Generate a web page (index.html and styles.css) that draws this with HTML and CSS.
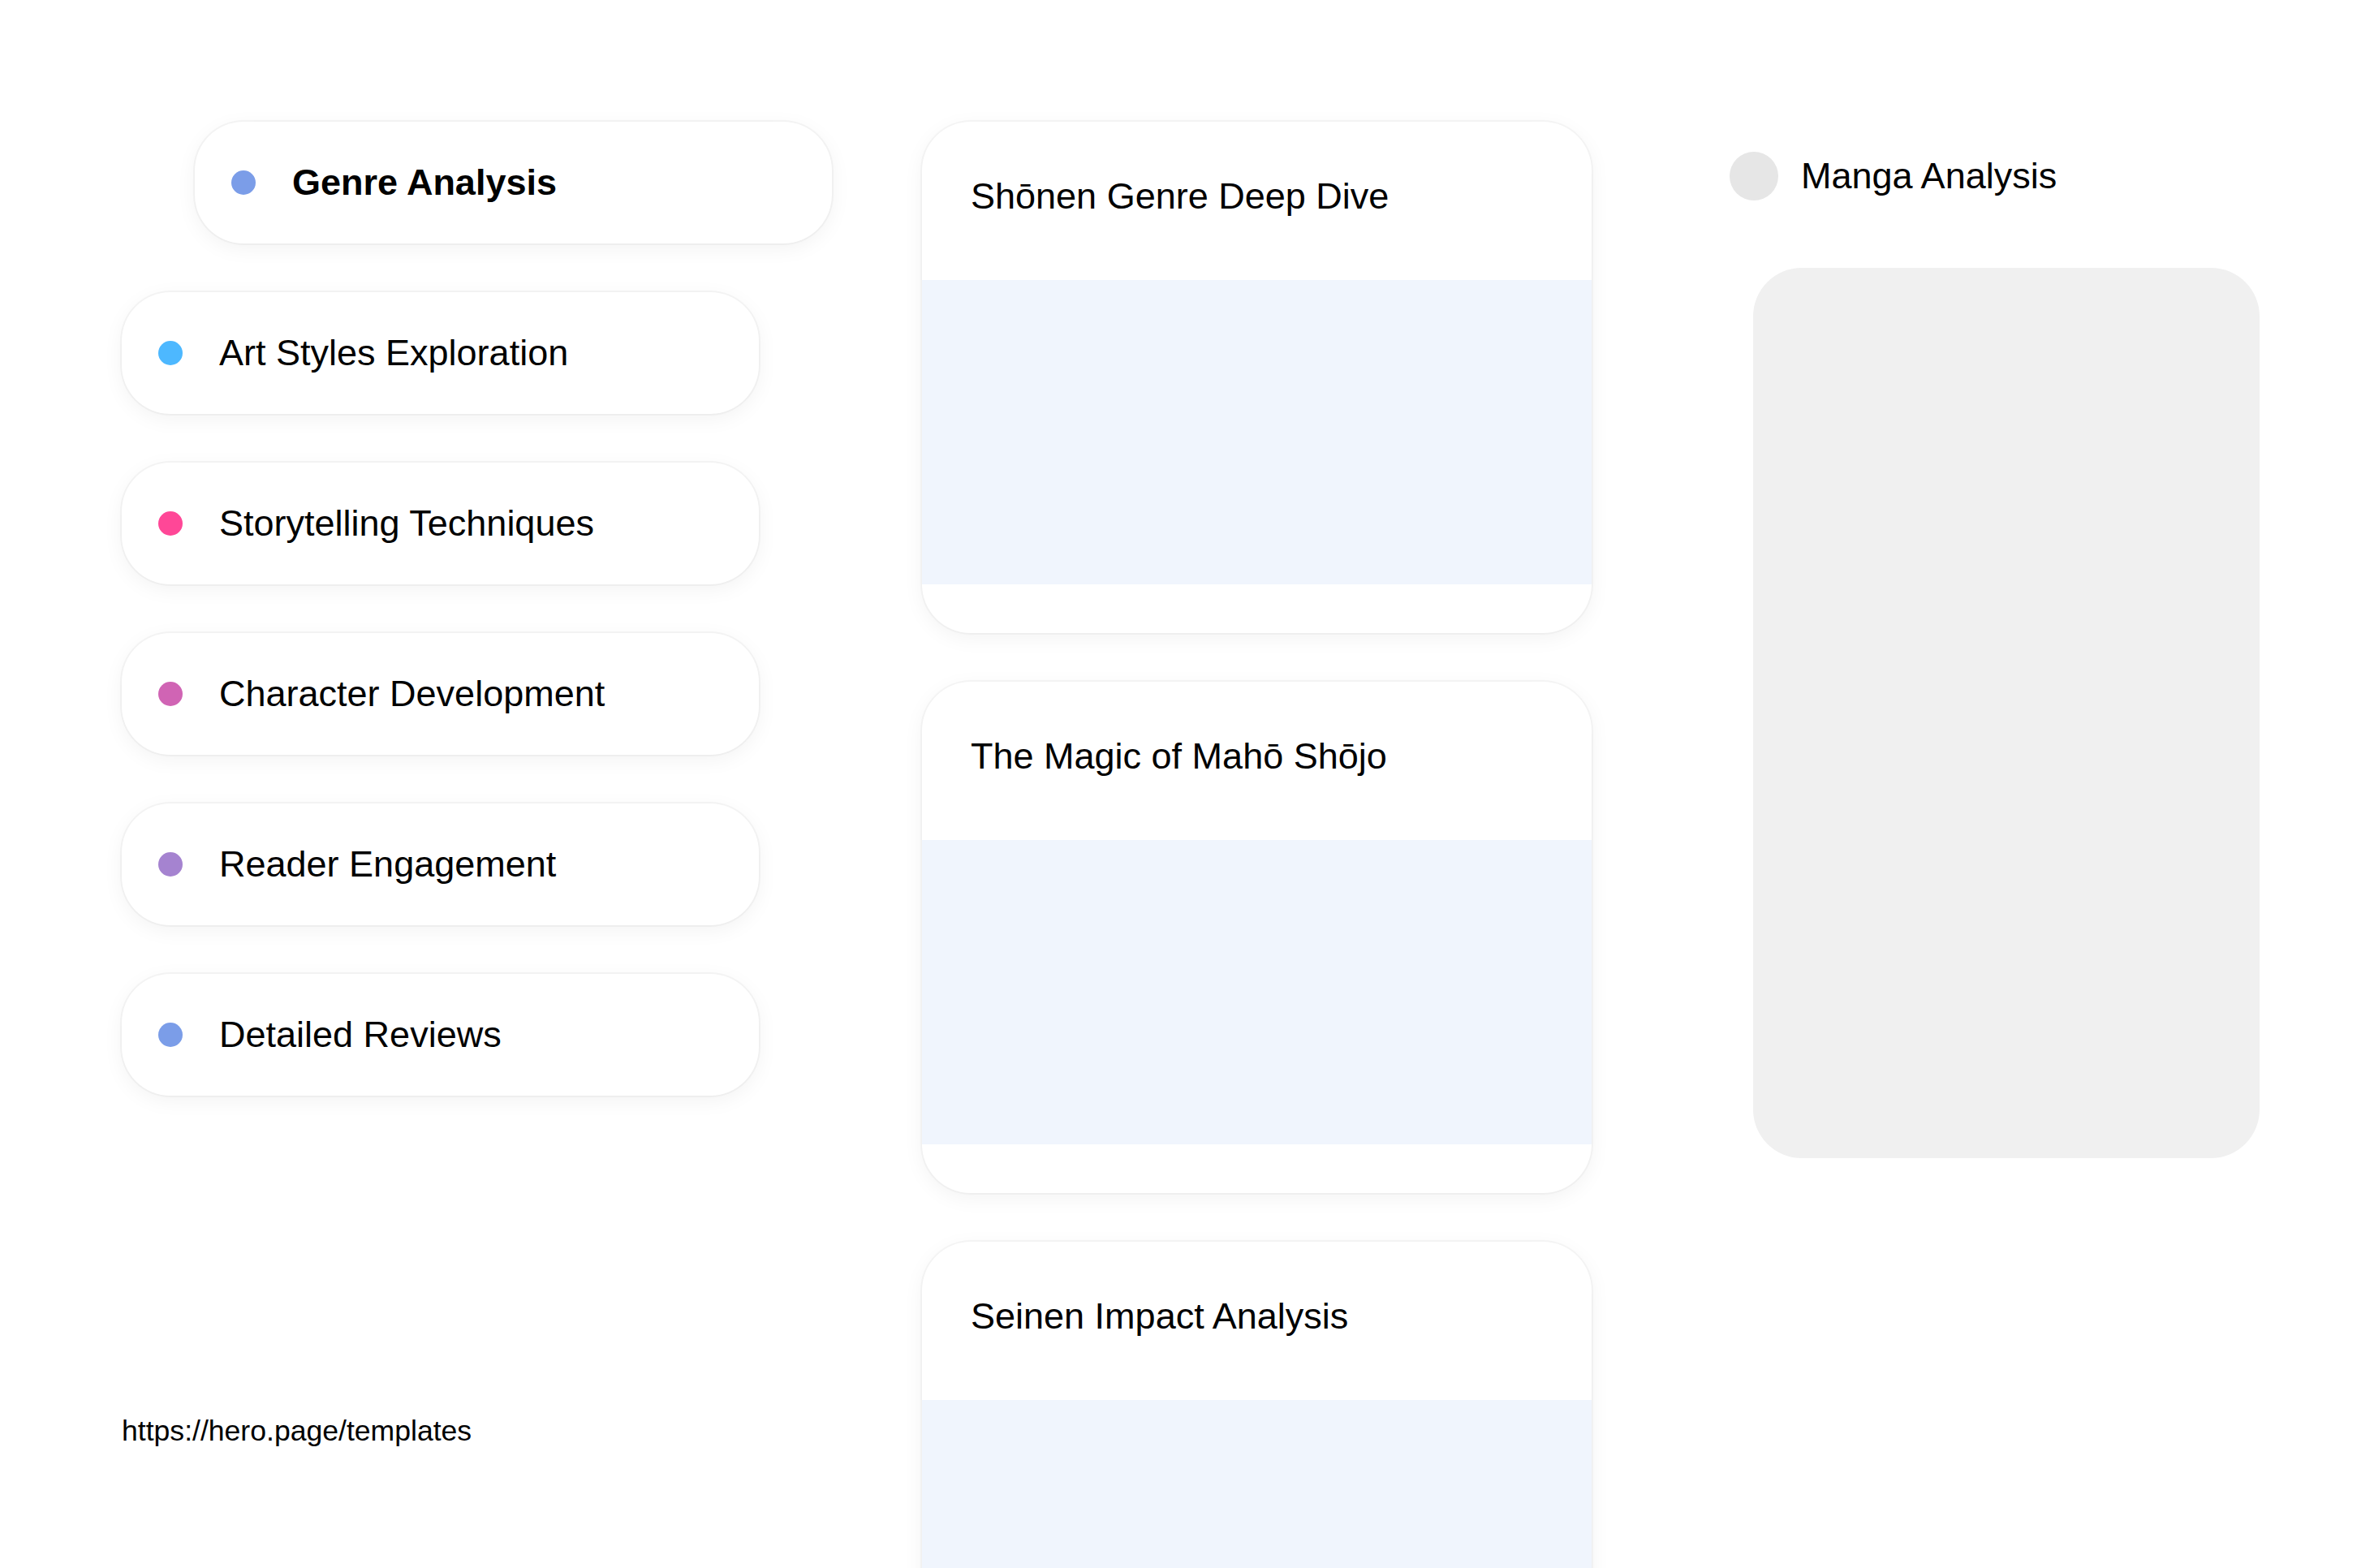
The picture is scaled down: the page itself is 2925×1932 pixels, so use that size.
FILE: index.html
```html
<!DOCTYPE html>
<html lang="en">
<head>
<meta charset="utf-8">
<title>Manga Analysis</title>
<link rel="stylesheet" href="styles.css">
</head>
<body>
<main class="page">
  <section class="topics">
    <ul class="topic-list">
      <li class="topic topic-active"><span class="dot dot-genre"></span><span class="topic-label">Genre Analysis</span></li>
      <li class="topic"><span class="dot dot-art"></span><span class="topic-label">Art Styles Exploration</span></li>
      <li class="topic"><span class="dot dot-story"></span><span class="topic-label">Storytelling Techniques</span></li>
      <li class="topic"><span class="dot dot-char"></span><span class="topic-label">Character Development</span></li>
      <li class="topic"><span class="dot dot-reader"></span><span class="topic-label">Reader Engagement</span></li>
      <li class="topic"><span class="dot dot-review"></span><span class="topic-label">Detailed Reviews</span></li>
    </ul>
    <p class="source">https://hero.page/templates</p>
  </section>

  <section class="articles">
    <article class="article">
      <h3 class="article-title">Shōnen Genre Deep Dive</h3>
      <div class="article-media"></div>
    </article>
    <article class="article">
      <h3 class="article-title">The Magic of Mahō Shōjo</h3>
      <div class="article-media"></div>
    </article>
    <article class="article">
      <h3 class="article-title">Seinen Impact Analysis</h3>
      <div class="article-media"></div>
    </article>
  </section>

  <aside class="profile">
    <div class="profile-head">
      <span class="avatar"></span>
      <span class="profile-name">Manga Analysis</span>
    </div>
    <div class="profile-panel"></div>
  </aside>
</main>
</body>
</html>
```

FILE: styles.css
```css
* {
  box-sizing: border-box;
}

html, body {
  margin: 0;
  padding: 0;
  background: #ffffff;
}

body {
  font-family: "Liberation Sans", Arial, Helvetica, sans-serif;
  color: #000000;
  overflow: hidden;
  height: 1932px;
}

.page {
  display: flex;
  align-items: flex-start;
  padding: 150px 0 0 150px;
}

/* Left column */
.topics {
  width: 785px;
  margin-right: 201px;
  display: flex;
  flex-direction: column;
}

.topic-list {
  list-style: none;
  margin: 0;
  padding: 0;
  display: flex;
  flex-direction: column;
  gap: 60px;
}

.topic {
  height: 150px;
  display: flex;
  align-items: center;
  gap: 45px;
  padding-left: 45px;
  background: #ffffff;
  border-radius: 60px;
  box-shadow: 0 0 0 2px rgba(0, 0, 0, 0.035), 0 6px 26px rgba(0, 0, 0, 0.05);
}

.topic-active {
  transform: translateX(90px);
}

.topic-active .topic-label {
  font-weight: 700;
}

.topic-label {
  font-size: 45px;
  line-height: 52px;
}

.dot {
  width: 30px;
  height: 30px;
  border-radius: 50%;
  flex: none;
}

.dot-genre { background: #7b9de8; }
.dot-art { background: #4db8ff; }
.dot-story { background: #ff4797; }
.dot-char { background: #d064b4; }
.dot-reader { background: #a583d0; }
.dot-review { background: #7b9de8; }

.source {
  margin: 393px 0 0 0;
  font-size: 35.6px;
  line-height: 41px;
}

/* Middle column */
.articles {
  width: 825px;
  margin-right: 170px;
  display: flex;
  flex-direction: column;
  gap: 60px;
  flex: none;
}

.article {
  background: #ffffff;
  border-radius: 60px;
  overflow: hidden;
  padding-bottom: 60px;
  box-shadow: 0 0 0 2px rgba(0, 0, 0, 0.03), 0 6px 26px rgba(0, 0, 0, 0.05);
}

.article-title {
  margin: 0;
  padding: 60px 60px 71px 60px;
  font-size: 45px;
  line-height: 64px;
  font-weight: 400;
}

.article-media {
  height: 375px;
  background: #f0f5fd;
}

/* Right column */
.profile {
  width: 653px;
  flex: none;
}

.profile-head {
  display: flex;
  align-items: center;
  gap: 28px;
  padding-top: 37px;
}

.avatar {
  width: 60px;
  height: 60px;
  border-radius: 50%;
  background: #e6e6e6;
  flex: none;
}

.profile-name {
  font-size: 45px;
  line-height: 52px;
}

.profile-panel {
  margin: 83px 0 0 29px;
  width: 624px;
  height: 1097px;
  border-radius: 60px;
  background: #f0f0f0;
}
```
